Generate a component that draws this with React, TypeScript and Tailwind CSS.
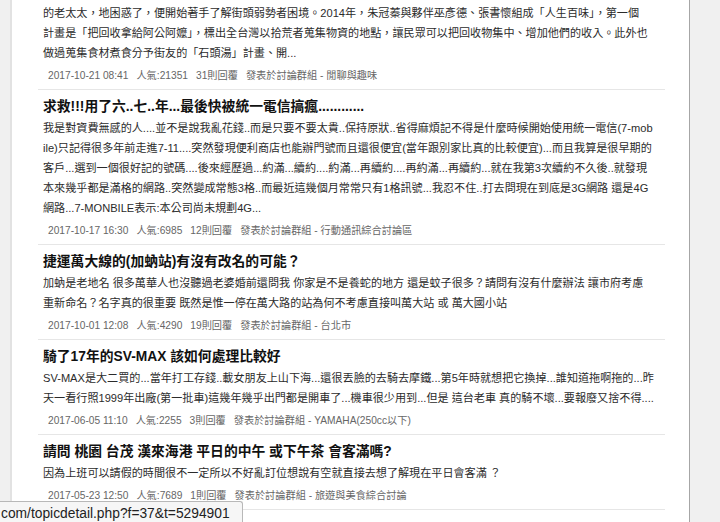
import React from 'react';

type Topic = {
  title?: string;
  lines: string[];
  date: string;
  views: string;
  replies: string;
  board: string;
};

const TOPICS: Topic[] = [
  {
    lines: [
      '的老太太，地困惑了，便開始著手了解街頭弱勢者困境。2014年，朱冠蓁與夥伴巫彥德、張書懷組成「人生百味」，第一個',
      '計畫是「把回收拿給阿公阿嬤」，標出全台灣以拾荒者蒐集物資的地點，讓民眾可以把回收物集中、增加他們的收入。此外也',
      '做過蒐集食材煮食分予街友的「石頭湯」計畫、開...',
    ],
    date: '2017-10-21 08:41',
    views: '人氣:21351',
    replies: '31則回覆',
    board: '發表於討論群組 - 閒聊與趣味',
  },
  {
    title: '求救!!!用了六..七..年...最後快被統一電信搞瘋............',
    lines: [
      '我是對資費無感的人....並不是說我亂花錢..而是只要不要太貴..保持原狀..省得麻煩記不得是什麼時候開始使用統一電信(7-mob',
      'ile)只記得很多年前走進7-11....突然發現便利商店也能辦門號而且還很便宜(當年跟別家比真的比較便宜)...而且我算是很早期的',
      '客戶...選到一個很好記的號碼....後來經歷過...約滿...續約....約滿...再續約....再約滿...再續約...就在我第3次續約不久後..就發現',
      '本來幾乎都是滿格的網路..突然變成常態3格..而最近這幾個月常常只有1格訊號...我忍不住..打去問現在到底是3G網路 還是4G',
      '網路...7-MONBILE表示:本公司尚未規劃4G...',
    ],
    date: '2017-10-17 16:30',
    views: '人氣:6985',
    replies: '12則回覆',
    board: '發表於討論群組 - 行動通訊綜合討論區',
  },
  {
    title: '捷運萬大線的(加蚋站)有沒有改名的可能？',
    lines: [
      '加蚋是老地名 很多萬華人也沒聽過老婆婚前還問我 你家是不是養蛇的地方 還是蚊子很多？請問有沒有什麼辦法 讓市府考慮',
      '重新命名？名字真的很重要 既然是惟一停在萬大路的站為何不考慮直接叫萬大站 或 萬大國小站',
    ],
    date: '2017-10-01 12:08',
    views: '人氣:4290',
    replies: '19則回覆',
    board: '發表於討論群組 - 台北市',
  },
  {
    title: '騎了17年的SV-MAX 該如何處理比較好',
    lines: [
      'SV-MAX是大二買的...當年打工存錢..載女朋友上山下海...還很丟臉的去騎去摩鐵...第5年時就想把它換掉...誰知道拖啊拖的...昨',
      '天一看行照1999年出廠(第一批車)這幾年幾乎出門都是開車了...機車很少用到...但是 這台老車 真的騎不壞...要報廢又捨不得....',
    ],
    date: '2017-06-05 11:10',
    views: '人氣:2255',
    replies: '3則回覆',
    board: '發表於討論群組 - YAMAHA(250cc以下)',
  },
  {
    title: '請問 桃園 台茂 漢來海港 平日的中午 或下午茶 會客滿嗎?',
    lines: ['因為上班可以請假的時間很不一定所以不好亂訂位想說有空就直接去想了解現在平日會客滿 ？'],
    date: '2017-05-23 12:50',
    views: '人氣:7689',
    replies: '1則回覆',
    board: '發表於討論群組 - 旅遊與美食綜合討論',
  },
];

const TopicRow: React.FC<{ topic: Topic; first?: boolean }> = ({ topic, first }) => (
  <div className={`${first ? 'pt-[3px]' : 'pt-[7px]'} pb-[5px] pl-[5px] border-b border-[#e6e6e6]`}>
    {topic.title && (
      <h2 className="mb-[1px] h-[20px] whitespace-nowrap text-[13.8px] font-bold leading-[20px] text-[#111]">
        {topic.title}
      </h2>
    )}
    {topic.lines.map((line, i) => (
      <p key={i} className="h-[20px] whitespace-nowrap text-[11.1px] leading-[20px] text-[#2b2b2b]">
        {line}
      </p>
    ))}
    <div className="mt-[5px] flex h-[16px] items-center gap-[8px] pl-[5px] whitespace-nowrap text-[10.2px] leading-[16px] text-[#666]">
      <span>{topic.date}</span>
      <span>{topic.views}</span>
      <span>{topic.replies}</span>
      <span>{topic.board}</span>
    </div>
  </div>
);

const App: React.FC = () => {
  return (
    <div className="relative flex h-[522px] w-[720px] overflow-hidden bg-white font-['Liberation_Sans','Noto_Sans_CJK_TC',sans-serif]">
      <div className="w-[10px] shrink-0 bg-[#f0f0f0]" />
      <div className="w-[2px] shrink-0 bg-[#e2e2e2]" />

      <main className="min-w-0 flex-1 pl-[26px] pr-[24px]">
        {TOPICS.map((topic, i) => (
          <TopicRow key={topic.date} topic={topic} first={i === 0} />
        ))}
      </main>

      <div className="w-px shrink-0 bg-[#a6a6a6]" />
      <div className="w-[30px] shrink-0 bg-[#f0f0f0]" />

      {/* link preview bubble at the bottom-left corner */}
      <div className="absolute bottom-0 left-0 h-[21px] w-[243px] rounded-tr-[3px] border-t border-r border-[#b8b8b8] bg-[#f6f6f6] pl-[1px] pt-[2px] whitespace-nowrap text-[13.8px] leading-[20px] text-[#222]">
        com/topicdetail.php?f=37&amp;t=5294901
      </div>
    </div>
  );
};

export default App;
